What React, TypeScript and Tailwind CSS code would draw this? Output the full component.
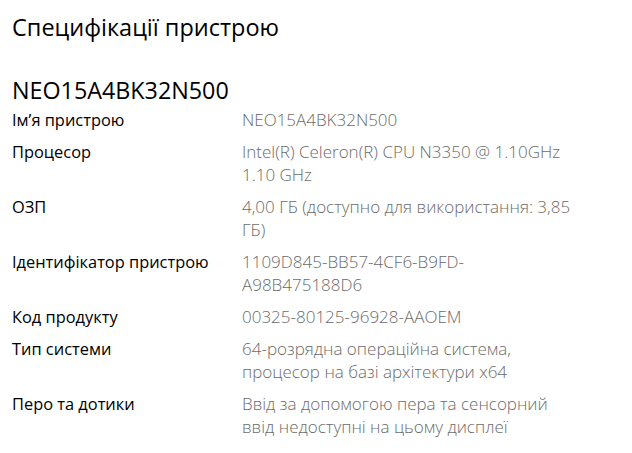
export default function App() {
  const rows: { label: string; lines: string[] }[] = [
    { label: "Ім’я пристрою", lines: ["NEO15A4BK32N500"] },
    { label: "Процесор", lines: ["Intel(R) Celeron(R) CPU N3350 @ 1.10GHz", "1.10 GHz"] },
    { label: "ОЗП", lines: ["4,00 ГБ (доступно для використання: 3,85", "ГБ)"] },
    { label: "Ідентифікатор пристрою", lines: ["1109D845-BB57-4CF6-B9FD-", "A98B475188D6"] },
    { label: "Код продукту", lines: ["00325-80125-96928-AAOEM"] },
    { label: "Тип системи", lines: ["64-розрядна операційна система,", "процесор на базі архітектури x64"] },
    { label: "Перо та дотики", lines: ["Ввід за допомогою пера та сенсорний", "ввід недоступні на цьому дисплеї"] },
  ];

  return (
    <div className="w-[632px] h-[453px] bg-white overflow-hidden px-3 font-['Open_Sans',sans-serif]">
      <h1 className="text-[23.5px] leading-[34px] pt-[10px] text-black">Специфікації пристрою</h1>
      <h2 className="text-[23.3px] leading-[30px] mt-[31px] text-black">NEO15A4BK32N500</h2>
      <div className="flex flex-col mt-[3px]">
        {rows.map((r) => (
          <div key={r.label} className="flex pb-[9px] text-[16.4px] leading-[23px]">
            <div className="w-[230px] shrink-0 text-black">{r.label}</div>
            <div className="text-[#6b6b6b] font-light text-[17px]">
              {r.lines.map((l) => (
                <div key={l} className="whitespace-nowrap">{l}</div>
              ))}
            </div>
          </div>
        ))}
      </div>
    </div>
  );
}
